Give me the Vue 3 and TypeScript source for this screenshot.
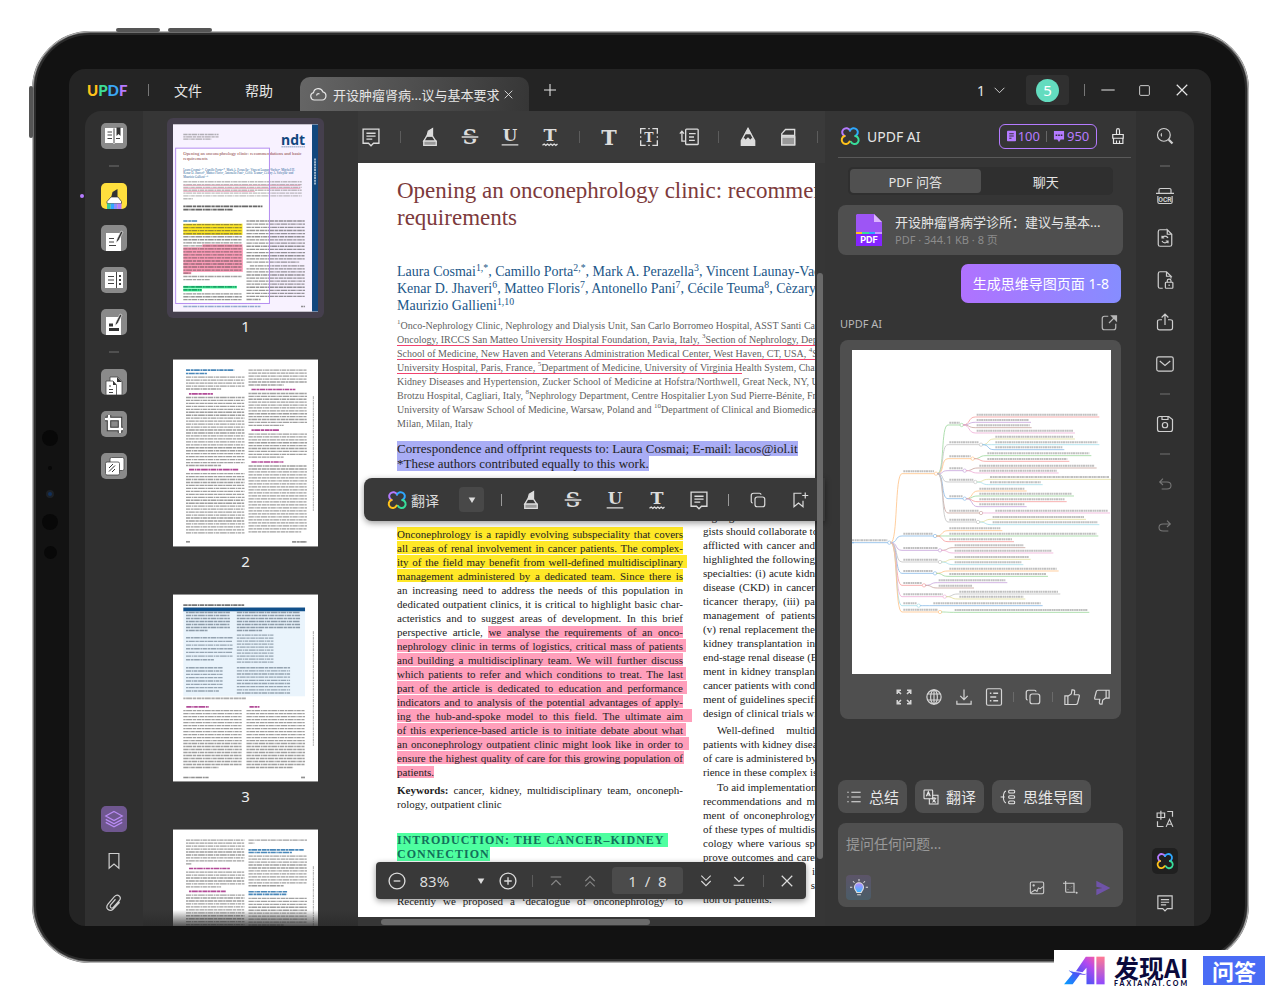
<script setup lang="ts">
import { ref } from 'vue'

interface DocLine { text: string; ext?: number }
interface Rule { x: number; y: number; w: number; c: string; h: number }
interface Branch { x0: number; y0: number; x1: number; y1: number; x2: number; c: string; dot: boolean }

const petals = '<g fill="none" stroke-width="2.4" stroke-linecap="round"><path d="M5.500 12A4.900 4.900 0 1 1 12 5.500" stroke="#b57bff"/><path d="M12 5.500A4.900 4.900 0 1 1 18.500 12" stroke="#2ea8ff"/><path d="M18.500 12A4.900 4.900 0 1 1 13 18.800" stroke="#37dd9b"/><path d="M11.400 18.800A4.900 4.900 0 1 1 5.500 12" stroke="#ffc21a"/></g>'

const glyphs: Record<string, string> = {
  petals,
  note: '<path d="M2.500 2.500h19v17H15l-3 3-3-3H2.500z"/><path d="M6.500 7.500h11M6.500 11h11M6.500 14.500h7"/>',
  marker: '<path d="M8.500 10.500 10 5l5-3v8.500z" fill="currentColor"/><path d="M8 11h7l4 6H4.500z"/><path d="M4.500 17h15v5h-15z" fill="#999"/>',
  strike: '<text x="12" y="20.500" text-anchor="middle" font-family="DejaVu Serif" font-weight="700" font-size="24" fill="currentColor" stroke="none">S</text><path d="M2 12h20" stroke="#3a3a3a" stroke-width="4"/><path d="M2 12h20"/>',
  under: '<text x="12" y="17" text-anchor="middle" font-family="DejaVu Serif" font-weight="700" font-size="20" fill="currentColor" stroke="none">U</text><path d="M2 21.500h20"/>',
  wavy: '<text x="12" y="17" text-anchor="middle" font-family="DejaVu Serif" font-weight="700" font-size="21" fill="currentColor" stroke="none">T</text><path d="m3 22 2-1.500L7 22l2-1.500 2 1.500 2-1.500 2 1.500 2-1.500 2 1.500 2-1.500"/>',
  text: '<text x="12" y="21" text-anchor="middle" font-family="DejaVu Serif" font-weight="700" font-size="25" fill="currentColor" stroke="none">T</text>',
  textbox: '<text x="12" y="17.500" text-anchor="middle" font-family="DejaVu Serif" font-weight="700" font-size="15" fill="currentColor" stroke="none">T</text><path d="M2 8V2h6M16 2h6v6M22 16v6h-6M8 22H2v-6M11 2h2M11 22h2M2 11v2M22 11v2"/>',
  callout: '<rect x="8" y="2.500" width="15" height="18.500" rx="1"/><path d="M12 8h8M12 12h6M12 16h7M8 17H3.500V5M1 8l2.500-3L6 8"/>',
  pencil: '<path d="M12 2l8 14.500V22H4v-5.500z"/><path d="M12 2l3 6H9zM4.500 17l2.500-3 2 2.500 3-3 3 3 2-2.500 2.500 3v5h-15z" fill="currentColor"/>',
  eraser: '<path d="M4.500 21.500V8L9 3h11v18.500z"/><path d="M4.500 12H20v9.500H4.500z" fill="#999"/><path d="M4.500 10.500H20" stroke-width="2.500"/>',
  copy: '<rect x="8" y="8" width="13" height="13" rx="3"/><path d="M5 16c-1.500 0-2-1-2-2V6c0-2 1-3 3-3h8c1.500 0 2 .5 2 2"/>',
  bookplus: '<path d="M14 3H4v18l6-5 6 5v-8M19 2v8M15 6h8"/>',
  minus: '<circle cx="12" cy="12" r="9.500"/><path d="M8 12h8"/>',
  plus: '<circle cx="12" cy="12" r="9.500"/><path d="M7.500 12h9M12 7.500v9"/>',
  first: '<path d="M4 6h16M5 18l7-7 7 7"/>',
  prev: '<path d="m5 12 7-7 7 7M5 20l7-7 7 7"/>',
  next: '<path d="m5 4 7 7 7-7M5 12l7 7 7-7"/>',
  last: '<path d="m5 6 7 7 7-7M4 18.500h16"/>',
  close: '<path d="m5 5 14 14M19 5 5 19"/>',
  add: '<path d="M12 3v18M3 12h18"/>',
  cloud: '<path d="M7 20a5 5 0 0 1-1-9.800 6.500 6.500 0 0 1 12.500-1A5.500 5.500 0 0 1 17.500 20z"/><path d="M14 12a3 3 0 0 0-3 0l-1 2"/>',
  chevron: '<path d="m3 7 9 9 9-9"/>',
  caret: '<path d="M4 6h16l-8 13z" fill="currentColor" stroke="none"/>',
  dash: '<path d="M2 12h20"/>',
  square: '<rect x="3" y="3" width="18" height="18" rx="2"/>',
  broom: '<path d="M10 10V4.500c0-3 4-3 4 0V10M5 10h14v5H5zM6 15v7h12.500v-7M10 22v-4M14 22v-4"/>',
  search: '<circle cx="10.500" cy="10.500" r="8.500"/><path d="M7.500 8.500c-1 1.500-.5 3 0 4"/><path d="m17 17 5 5" stroke-width="3"/>',
  ocr: '<path d="M4 8V3.500C4 2 5 2 6 2h12c1 0 2 0 2 1.500V8M0 8.500h24M2.500 12v8c0 1.500 1 2 2 2h15c1 0 2-.5 2-2v-8"/><text x="12" y="19.500" text-anchor="middle" font-family="Roboto" font-weight="700" font-size="9" fill="currentColor" stroke="none">OCR</text>',
  convert: '<path d="M15 1H5.500C4 1 3 2 3 3.500v17C3 22 4 23 5.500 23h13c1.500 0 2.500-1 2.500-2.500V7l-6-6v6h6"/><path d="M8 12a4.500 4.500 0 0 1 8 0M16 16a4.500 4.500 0 0 1-8 0M8 9v3h3M16 19v-3h-3"/>',
  lock: '<path d="M9 23H5.500C4 23 3 22 3 20.500v-17C3 2 4 1 5.500 1H14l6 6h-6V1M20 7v3"/><rect x="12.500" y="15" width="10" height="8" rx="1"/><path d="M15 15v-2c0-3 5-3 5 0v2M17.500 18v2"/>',
  share: '<path d="M8 9H5c-1.500 0-3 .5-3 2v9c0 1.500 1 2.500 3 2.500h14c2 0 3-1 3-2.500v-9c0-1.500-1.500-2-3-2h-3M12 16V2M7.500 6 12 1.500 16.500 6"/>',
  mail: '<rect x="1" y="2.500" width="22" height="19" rx="2.500"/><path d="m5 8 7 6 7-6"/>',
  save: '<path d="M5 2h12l5 4v13c0 2-1 3-3 3H5c-2 0-3-1-3-3V5c0-2 1-3 3-3zM8 2v4h8V2"/><circle cx="12" cy="13.500" r="3.500"/>',
  undo: '<path d="M9 4 4 9l5 4.500M4 9h11c8 0 8 10.500 0 10.500H7"/>',
  redo: '<path d="m15 4 5 5-5 4.500M20 9H9c-8 0-8 10.500 0 10.500h8"/>',
  translate: '<path d="M1.500 4h10v6h-10zM6.500 1v12M15 2h7v7M2 15v7h8"/><path d="m13.500 22.500 4.500-10 4.500 10M15 19h6"/>',
  layers: '<path d="M12 2 23 8l-11 6L1 8zM1 12.500l11 6 11-6M1 16.500l11 6 11-6"/>',
  bookmark: '<path d="M5.500 2h13v19.500L12 16l-6.500 5.500z"/>',
  clip: '<path d="m14 7-6.500 7.500c-2 3 1 5.500 3.500 3.500l8-9c4-5-2-10-6.500-5.500L4 13.500c-4.500 6 2.500 11 7 6.500l8.500-9"/>',
  exportup: '<path d="M11 3H6C4 3 3 4 3 6v12c0 2 1 3 3 3h12c2 0 3-1 3-3v-5M12 12l8-8"/><path d="M15.500 2.500H22V9z" fill="currentColor"/>',
  expand: '<path d="M8 8 3.500 3.500M16 8l4.500-4.500M8 16l-4.500 4.500M16 16l4.500 4.500M3 8V3h5M16 3h5v5M21 16v5h-5M8 21H3v-5" stroke-width="2"/>',
  globe: '<circle cx="12" cy="12" r="9.500"/><ellipse cx="12" cy="12" rx="4.500" ry="9.500"/><path d="M3.500 8h17M3.500 16h17M12 2.500v19"/>',
  download: '<path d="M12 2v13M7 10.500l5 5 5-5M2.500 17v4.500h19V17"/>',
  summary: '<rect x="2" y="1" width="20" height="22" rx="2"/><path d="M6.500 7h2M11 7h6.500M7 12h8M6.500 17h2M11 17h6.500" stroke-width="2"/>',
  up: '<path d="M2.500 10.500h4V22h-4zM6.500 11 11 8l1-5.500c3-.5 4 1 3.500 3L15 9h5.500c1.500 0 1.500 1.500 1 3l-2 8c-.5 1.500-1 2-2 2H6.500"/>',
  down: '<path d="M21.500 13.500h-4V3h4zM17.500 13 13 16l-1 5.500c-3 .5-4-1-3.500-3L9 15H3.500C2 15 2 13.500 2.500 12l2-7.500C5 3 5.500 3 6.500 3h11"/>',
  list: '<path d="M2 5h2M8 5h14M2 12h2M8 12h14M2 19h2M8 19h14"/>',
  swap: '<rect x="1.500" y="1.500" width="13" height="13" rx="1"/><path d="M14.500 9.500h8v13h-13v-8"/><path d="m5 11 3-7 3 7M6 9h4M13 14h7M16.500 12v2M14 20c3-1 4-3 4.500-6M14.500 15c1 3 3 4.500 5 5"/>',
  mind: '<path d="M9 3c-4 1-3.500 6-4 9 .5 3 0 8 4 9M1 12h6"/><rect x="13" y="2" width="9" height="4" rx="1.500"/><rect x="13" y="10" width="9" height="4" rx="1.500"/><rect x="13" y="18" width="9" height="4" rx="1.500"/>',
  image: '<rect x="2" y="3" width="20" height="17.500" rx="2"/><path d="m3 19 6-4 3 2 2-5 3 1 4-3"/><circle cx="7" cy="8" r="1"/>',
  crop: '<path d="M1.500 5H18v13M5.500 1.500V17c0 1 .5 1.500 1.500 1.500h13M9 14v.5M12 11.500v.5M14.500 9v.5"/><circle cx="22" cy="19" r=".7"/>',
  send: '<path d="m2 1 21 11L2 23V14l9-2-9-2z" fill="currentColor" stroke="none"/>',
}

const tiles: Record<string, string> = {
  reader: '<path d="M4 5h8l1 1 1-1h8v15h-8l-1 1-1-1H4z" fill="#fff"/><path d="M13 6v14M6.500 9H11M6.500 12H11M6.500 15.500H11M15 15.500h4" stroke="#444"/><path d="M15.500 4.500h4V13l-2-2-2 2z" fill="#333"/>',
  comment: '<path d="m10 15 1.500-6 5-3V15z" fill="#333"/><path d="M6 20.500v-2L10 14h7l3.500 4.500v2z" fill="#fff" stroke="#333" stroke-width=".7"/><path d="M6 20.500h3.500V26H6z" fill="#38c9a0"/><path d="M9.500 20.500H13V26H9.500z" fill="#32a8ff"/><path d="M13 20.500h3.500V26H13z" fill="#8b8cff"/><path d="M16.500 20.500h4V26h-4z" fill="#b57bff"/>',
  edit: '<path d="M5 8h15v18H5z" fill="#fff"/><path d="M8 13.500h5M8 17h5M8 20.500h7" stroke="#444"/><path d="m15 18 1-4 4-8 2 1-4 8z" fill="#333" stroke="#fff" stroke-width=".6"/>',
  form: '<path d="M4 5h18v16H4z" fill="#fff"/><path d="M15.500 5v16M7 9.500h6M7 13h6M7 16.500h6" stroke="#444"/><path d="M18 9h2M18 13h2M18 17h2" stroke="#444" stroke-width="2"/>',
  sign: '<path d="M5 8h15v18H5z" fill="#fff"/><path d="M8 16h4M8 20.500h10" stroke="#333" stroke-width="3"/><path d="m14 17 1-4 4-8 2 1-4 8z" fill="#333" stroke="#fff" stroke-width=".6"/>',
  organize: '<path d="M9 8h8l4 4.500V26H9z" fill="#fff" stroke="#444" stroke-width=".8"/><path d="M16 8v5h5z" fill="#333"/><path d="M5 12h7l3.500 4v10H5z" fill="#fff" stroke="#444" stroke-width=".8"/><path d="M12 12v4h3.500z" fill="#333"/><path d="M8 17h2M8 20.500h4M8 23.500h4" stroke="#444"/>',
  crop: '<path d="M4 8h15v14M8 4v14h14" stroke="#333" stroke-width="4.400" fill="none"/><path d="M4 8h15v14M8 4v14h14" stroke="#fff" stroke-width="2.400" fill="none"/>',
  batch: '<rect x="9" y="4.500" width="14" height="13" rx="1.500" fill="#fff" stroke="#444" stroke-width=".8"/><rect x="4.500" y="9" width="14" height="13" rx="1.500" fill="#fff" stroke="#444" stroke-width=".8"/><path d="m8 15 4-4M8 18.500l6-6M11 19l3-3" stroke="#333"/>',
}

const tools = ['note', '|', 'marker', 'strike', 'under', 'wavy', '|', 'text', 'textbox', 'callout', '|', 'pencil', 'eraser', '|']
const leftTools = ['reader', '|', 'comment', 'edit', 'form', 'sign', '|', 'organize', 'crop', 'batch']
const leftBottom = ['layers', 'bookmark', 'clip']
const rightTools = ['search', '|', 'ocr', 'convert', 'lock', 'share', 'mail', '|', 'save', '|', 'undo', 'redo']
const rightBottom = ['translate', 'petals', 'note']
const answerTools = ['expand', 'globe', 'download', 'summary', '|', 'copy', '|', 'up', 'down']

const yellow: DocLine[] = [
  { text: 'Onconephrology is a rapidly evolving subspeciality that covers' },
  { text: 'all areas of renal involvement in cancer patients. The complex-' },
  { text: 'ity of the field may benefit from well-defined multidisciplinary', ext: 4 },
  { text: 'management administered by a dedicated team. Since there is' },
]
const plain: DocLine[] = [
  { text: 'an increasing need to address the needs of this population in' },
  { text: 'dedicated outpatient clinics, it is critical to highlight basic char-' },
  { text: 'acteristics and to suggest areas of development. In this brief' },
]
const pink: DocLine[] = [
  { text: 'nephrology clinic in terms of logistics, critical mass of patients', ext: 3 },
  { text: 'and building a multidisciplinary team. We will further discuss' },
  { text: 'which patients to refer and which conditions to treat. The last', ext: 3 },
  { text: 'part of the article is dedicated to education and performance', ext: 4 },
  { text: 'indicators and to analysis of the potential advantages of apply-' },
  { text: 'ing the hub-and-spoke model to this field. The ultimate aim', ext: 9 },
  { text: 'of this experience-based article is to initiate debate about what', ext: 3 },
  { text: 'an onconephrology outpatient clinic might look like in order to', ext: 6 },
  { text: 'ensure the highest quality of care for this growing population of', ext: 1 },
]
const rightParas: string[][] = [
  ['highlight several of the', 'gists should collaborate to', 'afflicted with cancer and', 'highlighted the following', 'specialties: (i) acute kidn', 'disease (CKD) in cancer', 'ticancer therapy, (iii) pa', 'management of patients', '(v) renal replacement the', 'kidney transplantation in', 'end-stage renal disease (E', 'ment in kidney transplan', 'cancer patients with cond', 'ment of guidelines specifi', 'design of clinical trials wit'],
  ['Well-defined multid', 'patients with kidney disea', 'of care is administered by', 'rience in these complex is'],
  ['To aid implementation', 'recommendations and m', 'ment of onconephrology', 'of these types of multidis', 'cology where various sp', 'prove outcomes and care', 'perspective article the i', 'clinic might look to s'],
]

const question = ref('')
const zoom = ref('83%')
const pageField = ref('1  /  8')

function block(x: number, y: number, w: number, n: number, pitch: number, c = '#555', lastW = 0.6): Rule[] {
  return Array.from({ length: n }, (_, i) => ({ x, y: y + i * pitch, w: i === n - 1 ? w * lastW : w, c, h: 4 }))
}
const head = (x: number, y: number, w: number, c: string): Rule => ({ x, y, w, c, h: 5 })
const blue = '#1f6ba8'
const plum = '#a0207f'

const thumbs: Rule[][] = [
  [
    ...block(31, 30, 106, 3, 7, '#777', 0.8),
    ...block(31, 172, 356, 7, 8.5, '#888', 0.08),
    head(31, 246, 238, '#444'), head(31, 256, 150, '#444'), head(31, 290, 42, blue),
    ...block(31, 301, 176, 17, 9.1, '#444', 0.13),
    ...block(31, 457, 176, 2, 9.5, '#555', 0.45),
    head(31, 488, 160, '#128a5a'), head(31, 497, 55, '#128a5a'),
    ...block(31, 509, 176, 3, 8.8, '#444', 1),
    ...block(221, 290, 176, 14, 9.5, '#444', 0.9),
    ...block(231, 425, 166, 1, 9.2, '#444', 1), ...block(221, 434, 176, 11, 9.2, '#444', 0.24),
    ...block(31, 547, 232, 1, 8, '#3d6fa5', 1), head(385, 547, 12, '#777'),
  ],
  [
    head(39, 32, 145, blue), head(39, 42, 64, blue), ...block(39, 53, 176, 5, 8.9), head(48, 103, 72, plum),
    ...block(39, 114, 176, 24, 8.9), head(48, 331, 148, plum), ...block(39, 343, 176, 21, 8.9, '#555', 1),
    ...block(227, 32, 176, 6, 8.900), head(236, 90, 132, plum), ...block(227, 102, 176, 12, 8.7), head(236, 212, 84, plum),
    ...block(227, 224, 176, 9, 8.7), head(236, 308, 96, plum), ...block(227, 320, 176, 23, 9, '#555', 0.9),
    head(39, 548, 12, '#777'), head(358, 548, 45, '#777'),
  ],
  [
    head(31, 32, 183, '#555'), ...block(39, 54, 132, 7, 9, '#456', 0.5), ...block(192, 54, 190, 7, 9, '#456', 0.4),
    ...block(39, 130, 140, 7, 11, '#567', 0.6), ...block(39, 220, 110, 8, 10, '#567', 0.9),
    ...block(192, 122, 110, 10, 9, '#567', 1), ...block(192, 220, 160, 9, 9.500, '#567', 1),
    head(31, 312, 188, '#999'), head(40, 338, 68, plum), head(230, 338, 30, plum),
    ...block(31, 349, 176, 20, 9), ...block(221, 349, 176, 20, 9, '#555', 0.8), head(31, 550, 76, '#777'), head(385, 550, 12, '#777'),
  ],
  [
    ...block(39, 32, 176, 9, 8.9, '#555', 0.1), head(48, 117, 124, plum), ...block(39, 128, 176, 6, 8.9), head(48, 186, 112, plum),
    ...block(39, 197, 176, 12, 8.9), ...block(227, 32, 176, 2, 9, '#555', 0.1), head(227, 61, 166, blue), head(227, 69, 132, blue),
    ...block(227, 80, 176, 11, 8.9), head(227, 187, 116, blue), head(227, 195, 116, blue), ...block(227, 207, 176, 10, 8.9),
  ],
]
const weave = ['13 2 8 1.500 17 2 5 1.500', '7 1.500 18 2 10 2 14 1.500', '16 2 4 1.500 11 2 20 2 6 1.500']

const palette = ['#f5a0a0', '#c8a6dc', '#c9a6a0', '#efb0d8', '#e2dfa0', '#a8e0ea', '#8bbce8', '#9fd89f']
const orange = '#ffc48a'
const branches: Branch[] = []
const link = (x0: number, y0: number, x1: number, y1: number, x2: number, c: string, dot: boolean) => branches.push({ x0, y0, x1, y1, x2, c, dot })
link(96, 640, 96, 640, 208, '#8bbce8', true)
;([[433, 348, orange], [620, 345, '#8bbce8'], [663, 360, '#c8a6dc'], [698, 360, '#c4c4c4'], [732, 345, '#8bbce8'], [768, 312, '#f5a0a0'], [802, 374, '#efb0d8'], [829, 296, '#a8e0ea'], [848, 360, orange]] as [number, number, string][])
  .forEach(([y, x, c]) => link(212, 640, 250, y, x, c, true))
;([[287, 425, '#9fd89f'], [346, 483, '#c4c4c4'], [388, 458, orange], [424, 434, '#c8a6dc'], [458, 466, '#c4c4c4'], [508, 434, '#8bbce8'], [551, 483, '#c9a6a0'], [578, 474, '#c4c4c4']] as [number, number, string][])
  .forEach(([y, x, c]) => link(352, 433, 388, y, x, c, true))
// Each group: parent x, parent y, leaf x, [leaf y, leaf end, palette index]
;([[425, 287, 470, [[263, 838, 0], [279, 633, 1], [295, 635, 2], [311, 765, 3]]], [483, 346, 526, [[329, 765, 4], [346, 838, 5], [361, 733, 6]]],
  [458, 388, 502, [[379, 814, 7], [396, 748, 0]]], [434, 424, 478, [[416, 830, 2], [431, 716, 3]]], [466, 458, 510, [[450, 873, 4], [466, 668, 5]]],
  [434, 508, 478, [[485, 620, 8], [500, 762, 7], [517, 740, 0], [532, 620, 1]]], [483, 551, 526, [[551, 870, 3]]], [474, 578, 518, [[570, 798, 4], [586, 838, 5]]],
  [345, 620, 388, [[604, 547, 8], [620, 835, 7], [637, 582, 0]]], [360, 663, 404, [[655, 616, 2], [671, 700, 3]]], [360, 698, 404, [[690, 632, 4], [706, 610, 5]]],
  [345, 732, 388, [[725, 716, 8], [741, 684, 7]]], [312, 768, 356, [[760, 562, 1], [776, 462, 2]]], [374, 802, 418, [[794, 721, 9], [809, 616, 4]]],
  [296, 829, 340, [[829, 668, 6]]], [360, 848, 404, [[849, 808, 7]]]] as [number, number, number, [number, number, number][]][])
  .forEach(([px, py, x, kids]) => kids.forEach(([y, e, k]) => link(px + 4, py, x, y, e, [...palette, orange, '#c4c4c4'][k], false)))

const curve = (b: Branch) => `M${b.x0} ${b.y0}C${b.x0 + 22} ${b.y0} ${b.x1 - 26} ${b.y1} ${b.x1 - 4} ${b.y1}H${b.x2}`
</script>

<template>
  <main class="stage">
    <div class="device">
      <i class="key key-a"></i><i class="key key-b"></i><i class="key key-c"></i>
      <div class="sensors"><i class="big"></i><i class="dot"></i><i class="lens"></i><i class="big"></i><i class="mid"></i></div>
      <div class="screen">
        <header class="titlebar">
          <strong class="brand"><span class="u">U</span><span class="p">P</span><span class="d">D</span><span class="f">F</span></strong>
          <i class="vr"></i>
          <nav class="menus"><button>文件</button><button>帮助</button></nav>
          <div class="doc-tab">
            <svg class="ic s18" viewBox="0 0 24 24" v-html="glyphs.cloud"></svg>
            <span>开设肿瘤肾病...议与基本要求</span>
            <button aria-label="关闭标签"><svg class="ic s14" viewBox="0 0 24 24" v-html="glyphs.close"></svg></button>
          </div>
          <button class="add" aria-label="新标签"><svg class="ic s16" viewBox="0 0 24 24" v-html="glyphs.add"></svg></button>
          <div class="win">
            <button class="count">1 <svg class="ic s14" viewBox="0 0 24 24" v-html="glyphs.chevron"></svg></button>
            <button class="avatar"><span>5</span></button>
            <i class="vr"></i>
            <button aria-label="最小化"><svg class="ic s16" viewBox="0 0 24 24" v-html="glyphs.dash"></svg></button>
            <button aria-label="最大化"><svg class="ic s14" viewBox="0 0 24 24" v-html="glyphs.square"></svg></button>
            <button aria-label="关闭"><svg class="ic s18" viewBox="0 0 24 24" v-html="glyphs.close"></svg></button>
          </div>
        </header>

        <div class="work">
          <aside class="rail left">
            <template v-for="(t, i) in leftTools" :key="i">
              <i v-if="t === '|'" class="hr"></i>
              <button v-else class="tile" :class="{ on: t === 'comment' }" :aria-label="t"><svg viewBox="0 0 26 26" fill="none" v-html="tiles[t]"></svg></button>
            </template>
            <div class="foot">
              <button v-for="t in leftBottom" :key="t" :class="{ lay: t === 'layers' }" :aria-label="t"><svg class="ic s18" viewBox="0 0 24 24" v-html="glyphs[t]"></svg></button>
            </div>
            <i class="active-dot"></i>
          </aside>

          <section class="thumbs">
            <figure v-for="(rules, i) in thumbs" :key="i" :class="{ current: i === 0 }">
              <div class="frame">
                <svg viewBox="0 0 436 562">
                  <rect width="436" height="562" fill="#fff" />
                  <template v-if="i === 0">
                    <rect width="436" height="562" fill="#f8f2ff" />
                    <rect x="8" y="71" width="282" height="467" fill="#fff" />
                    <rect x="418" width="18" height="562" fill="#11477d" />
                    <text x="325" y="62" class="t-ndt">ndt</text>
                    <path d="M326 67h71" stroke="#11477d" stroke-width="2" stroke-dasharray="5 1" opacity=".7" />
                    <path d="M427 102v80" stroke="#fff" stroke-width="5" stroke-dasharray="6 2" opacity=".7" />
                    <text x="31" y="91" class="t-title">Opening an onconephrology clinic: recommendations and basic</text>
                    <text x="31" y="108" class="t-title">requirements</text>
                    <text x="31" y="140" class="t-auth">Laura Cosmai¹·*, Camillo Porta²·*, Mark A. Perazella³, Vincent Launay-Vacher⁴, Mitchell H.</text>
                    <text x="31" y="150" class="t-auth">Kenar D. Jhaveri⁶, Matteo Floris⁷, Antonello Pani⁷, Cécile Teuma⁸, Cèzary A. Szczylik⁹ and</text>
                    <text x="31" y="160" class="t-auth">Maurizio Gallieni¹·¹⁰</text>
                    <rect x="31" y="298" width="178" height="34" fill="#ffe827" />
                    <rect x="88" y="360" width="121" height="9" fill="#ff9fbb" /><rect x="31" y="369" width="179" height="74" fill="#ff9fbb" /><rect x="31" y="441" width="24" height="9" fill="#ff9fbb" />
                    <rect x="31" y="485" width="161" height="8" fill="#4effa0" /><rect x="31" y="494" width="56" height="8" fill="#4effa0" />
                    <path d="M31 183h352M31 192h352M31 201h215" stroke="#e88aa8" stroke-width="2" />
                  </template>
                  <template v-if="i === 2">
                    <rect x="31" y="39" width="366" height="12" fill="#11508a" /><rect x="31" y="51" width="366" height="255" fill="#eaf4fc" />
                  </template>
                  <path v-for="(r, k) in rules" :key="k" :d="`M${r.x} ${r.y}h${r.w}`" :stroke="r.c" :stroke-width="r.h" :stroke-dasharray="weave[k % 3]" :opacity="r.h === 5 ? .8 : .55" />
                  <path v-if="i" d="M422 110v345" stroke="#888" stroke-width="3" stroke-dasharray="9 2 4 2" opacity=".7" />
                  <rect v-if="i === 0" x="8" y="71" width="282" height="467" fill="none" stroke="#b48cf0" stroke-width="3" />
                </svg>
              </div>
              <figcaption v-if="i < 3">{{ i + 1 }}</figcaption>
            </figure>
          </section>

          <section class="viewer">
            <div class="toolbar">
              <template v-for="(t, i) in tools" :key="i">
                <i v-if="t === '|'" class="sep"></i>
                <button v-else :aria-label="t"><svg class="ic s20" viewBox="0 0 24 24" v-html="glyphs[t]"></svg></button>
              </template>
            </div>
            <article class="page">
              <h1>Opening an onconephrology clinic: recommendations<br>requirements</h1>
              <p class="authors">Laura Cosmai<sup>1,*</sup>, Camillo Porta<sup>2,*</sup>, Mark A. Perazella<sup>3</sup>, Vincent Launay-Vacher<br>Kenar D. Jhaveri<sup>6</sup>, Matteo Floris<sup>7</sup>, Antonello Pani<sup>7</sup>, Cécile Teuma<sup>8</sup>, Cèzary A. Szczylik<br>Maurizio Gallieni<sup>1,10</sup></p>
              <p class="affil"><sup>1</sup>Onco-Nephrology Clinic, Nephrology and Dialysis Unit, San Carlo Borromeo Hospital, ASST Santi Carlo<br><u>Oncology, IRCCS San Matteo University Hospital Foundation, Pavia, Italy, <sup>3</sup>Section of Nephrology, Department</u><br><u>School of Medicine, New Haven and Veterans Administration Medical Center, West Haven, CT, USA, <sup>4</sup>Service</u><br><u>University Hospital, Paris, France, <sup>5</sup>Department of Medicine, University of Virginia H</u>ealth System, Charlottesville<br>Kidney Diseases and Hypertension, Zucker School of Medicine at Hofstra/Northwell, Great Neck, NY, USA<br>Brotzu Hospital, Cagliari, Italy, <sup>8</sup>Nephrology Department, Centre Hospitalier Lyon Sud Pierre-Bénite, France<br>University of Warsaw School of Medicine, Warsaw, Poland and <sup>10</sup>Department of Clinical and Biomedical<br>Milan, Milan, Italy</p>
              <p class="corr"><mark>Correspondence and offprint requests to: Laura Cosmai; E-mail: lacos@iol.it</mark><br><mark>*These authors contributed equally to this work.</mark></p>
              <div class="cols">
                <div class="col-a">
                  <div v-for="l in yellow" :key="l.text" class="ln y" :style="{ paddingRight: (l.ext ?? 0) + 'px' }"><span>{{ l.text }}</span></div>
                  <div v-for="l in plain" :key="l.text" class="ln">{{ l.text }}</div>
                  <div class="ln">perspective article, <mark class="k">we analyse the requirements of an onco-</mark></div>
                  <div v-for="l in pink" :key="l.text" class="ln k" :style="{ paddingRight: (l.ext ?? 0) + 'px' }"><span>{{ l.text }}</span></div>
                  <div class="ln end"><mark class="k">patients.</mark></div>
                  <div class="ln keywords"><b>Keywords:</b> cancer, kidney, multidisciplinary team, onconeph-</div>
                  <div class="ln end">rology, outpatient clinic</div>
                  <h2><mark>INTRODUCTION: THE CANCER–KIDNEY&nbsp;</mark><br><mark>CONNECTION</mark></h2>
                  <div class="ln recent">Recently we proposed a ‘decalogue of onconephrology’ to</div>
                </div>
                <div class="col-b">
                  <p v-for="(p, i) in rightParas" :key="i" :class="'p' + i"><span v-for="l in p" :key="l" class="ln">{{ l }}</span><span v-if="i === 2" class="ln end">tion of patients.</span></p>
                </div>
              </div>
            </article>
            <div class="hscroll"><i></i></div>
            <div class="vscroll"><i></i></div>
            <div class="selbar">
              <button class="tr"><svg class="ic s20" viewBox="0 0 24 24" v-html="glyphs.petals"></svg>翻译</button>
              <button class="drop" aria-label="更多"><svg class="ic s12" viewBox="0 0 24 24" v-html="glyphs.caret"></svg></button>
              <i class="sep lit"></i>
              <button v-for="t in ['marker', 'strike', 'under', 'wavy', 'note']" :key="t" :aria-label="t"><svg class="ic s20" viewBox="0 0 24 24" v-html="glyphs[t]"></svg></button>
              <i class="sep lit"></i>
              <button v-for="t in ['copy', 'bookplus']" :key="t" :aria-label="t"><svg class="ic s18" viewBox="0 0 24 24" v-html="glyphs[t]"></svg></button>
            </div>
            <div class="zoombar">
              <button aria-label="缩小"><svg class="ic s20" viewBox="0 0 24 24" v-html="glyphs.minus"></svg></button>
              <label class="pct"><select v-model="zoom" aria-label="缩放"><option>83%</option><option>100%</option></select><svg class="ic s12" viewBox="0 0 24 24" v-html="glyphs.caret"></svg></label>
              <button aria-label="放大"><svg class="ic s20" viewBox="0 0 24 24" v-html="glyphs.plus"></svg></button>
              <i class="sep"></i>
              <button class="dim" aria-label="首页"><svg class="ic s16" viewBox="0 0 24 24" v-html="glyphs.first"></svg></button>
              <button class="dim" aria-label="上一页"><svg class="ic s16" viewBox="0 0 24 24" v-html="glyphs.prev"></svg></button>
              <input v-model="pageField" aria-label="页码">
              <button aria-label="下一页"><svg class="ic s16" viewBox="0 0 24 24" v-html="glyphs.next"></svg></button>
              <button aria-label="末页"><svg class="ic s16" viewBox="0 0 24 24" v-html="glyphs.last"></svg></button>
              <i class="sep"></i>
              <button aria-label="关闭"><svg class="ic s18" viewBox="0 0 24 24" v-html="glyphs.close"></svg></button>
            </div>
          </section>

          <section class="ai">
            <header class="ai-head">
              <svg class="ic s20" viewBox="0 0 24 24" v-html="glyphs.petals"></svg>
              <h2>UPDF AI</h2>
              <div class="quota">
                <svg viewBox="0 0 12 14" width="9" height="12"><rect width="12" height="14" rx="1" fill="#b57bff" /><path d="M3 4h6M3 7h6M3 10h3" stroke="#35303d" stroke-width="1.500" /></svg><span>100</span><i></i>
                <svg viewBox="0 0 14 13" width="12" height="11"><path d="M1 0h12v10H9l-2 3-2-3H1z" fill="#b57bff" /><path d="M3 5h2M6 5h2M9 5h2" stroke="#35303d" stroke-width="2" /></svg><span>950</span>
              </div>
              <button aria-label="清除"><svg class="ic s18" viewBox="0 0 24 24" v-html="glyphs.broom"></svg></button>
            </header>
            <div class="tabs"><button class="sel">PDF 问答</button><button>聊天</button></div>
            <div class="file">
              <svg viewBox="0 0 26 32" width="26" height="32">
                <path d="M1 0h17l8 8v24H0V1z" fill="#9d55f5" /><path d="M0 20h26v12H0z" fill="#8424ff" /><path d="M18 0l8 8h-8z" fill="#dcb5ff" />
                <path d="M0 19h6" stroke="#ffc21a" stroke-width="2" /><path d="M6 19h7" stroke="#37dd9b" stroke-width="2" /><path d="M13 19h6" stroke="#2ea8ff" stroke-width="2" /><path d="M19 19h7" stroke="#c79bff" stroke-width="2" />
                <text x="13" y="29" text-anchor="middle" font-family="Inter" font-weight="700" font-size="9" fill="#fff">PDF</text>
              </svg>
              <div><b>开设肿瘤肾病学诊所：建议与基本...</b><small>PDF · 344.1 KB · 8 页</small></div>
            </div>
            <p class="bubble">生成思维导图页面 1-8</p>
            <div class="from"><span>UPDF AI</span><button aria-label="打开"><svg class="ic s18" viewBox="0 0 24 24" v-html="glyphs.exportup"></svg></button></div>
            <div class="answer">
              <svg class="map" viewBox="96 62 777 973" fill="none">
                <rect x="96" y="62" width="777" height="973" fill="#fff" />
                <g v-for="(b, i) in branches" :key="i">
                  <path :d="curve(b)" :stroke="b.c" stroke-width="2.500" />
                  <path :d="`M${b.x1} ${b.y1 - 7}H${b.x2 - 6}`" stroke="#8d8d8d" stroke-width="6" stroke-dasharray="6 1.500 5 1 7 1.500 4 1" opacity=".55" />
                  <circle v-if="b.dot" :cx="b.x2" :cy="b.y1" r="5" :stroke="b.c" stroke-width="2" fill="#fff" />
                </g>
              </svg>
              <div class="acts">
                <template v-for="(t, i) in answerTools" :key="i">
                  <i v-if="t === '|'"></i>
                  <button v-else :aria-label="t"><svg class="ic s18" viewBox="0 0 24 24" v-html="glyphs[t]"></svg></button>
                </template>
              </div>
            </div>
            <div class="chips">
              <button><svg class="ic s16" viewBox="0 0 24 24" v-html="glyphs.list"></svg>总结</button>
              <button><svg class="ic s16" viewBox="0 0 24 24" v-html="glyphs.swap"></svg>翻译</button>
              <button><svg class="ic s16" viewBox="0 0 24 24" v-html="glyphs.mind"></svg>思维导图</button>
            </div>
            <form class="ask" @submit.prevent>
              <textarea v-model="question" placeholder="提问任何问题..." aria-label="提问"></textarea>
              <div class="ask-row">
                <button type="button" class="bulb" aria-label="提示">
                  <svg viewBox="0 0 24 24" width="18" height="18" fill="none" stroke="#ddd" stroke-width="1.400">
                    <defs><linearGradient id="bulb" x1="0" y1="0" x2="0" y2="1"><stop offset="0" stop-color="#b98aff" /><stop offset="1" stop-color="#38b6ff" /></linearGradient></defs>
                    <path d="M9 18c0-2-3-3-3-7a6 6 0 0 1 12 0c0 4-3 5-3 7z" fill="url(#bulb)" /><path d="M9.500 21h5M12 0v3M4 3l2 2M20 3l-2 2M0 11h3M21 11h3" />
                  </svg>
                </button>
                <button type="button" aria-label="图片"><svg class="ic s16" viewBox="0 0 24 24" v-html="glyphs.image"></svg></button>
                <button type="button" aria-label="截图"><svg class="ic s16" viewBox="0 0 24 24" v-html="glyphs.crop"></svg></button>
                <button class="send" aria-label="发送"><svg class="ic s16" viewBox="0 0 24 24" v-html="glyphs.send"></svg></button>
              </div>
            </form>
          </section>

          <aside class="rail right">
            <template v-for="(t, i) in rightTools" :key="i">
              <i v-if="t === '|'" class="hr"></i>
              <button v-else :class="{ dim: t === 'undo' || t === 'redo' }" :aria-label="t"><svg class="ic" :class="t === 'undo' || t === 'redo' ? 's16' : 's18'" viewBox="0 0 24 24" v-html="glyphs[t]"></svg></button>
            </template>
            <div class="foot">
              <button v-for="t in rightBottom" :key="t" :class="{ dark: t === 'petals' }" :aria-label="t"><svg class="ic s18" viewBox="0 0 24 24" v-html="glyphs[t]"></svg></button>
            </div>
          </aside>
        </div>
      </div>
    </div>

    <div class="credit">
      <svg viewBox="0 0 124 88" width="41" height="29">
        <defs>
          <linearGradient id="ga" x1="0" y1="1" x2="1" y2="0"><stop offset="0" stop-color="#00a2ff" /><stop offset=".4" stop-color="#4b54f5" /><stop offset=".75" stop-color="#b04af0" /><stop offset="1" stop-color="#f45aa8" /></linearGradient>
          <linearGradient id="gi" x1="0" y1="1" x2="0" y2="0"><stop offset="0" stop-color="#8f49ff" /><stop offset="1" stop-color="#ff7a93" /></linearGradient>
        </defs>
        <path d="M66 2h26v84H68V58L48 56l-22 30H0l26-32-12-10 22 2z" fill="url(#ga)" /><path d="M68 36v18H52z" fill="#fff" /><path d="M98 2h25v84H98z" fill="url(#gi)" />
        <path d="M18 44c16 6 34 2 50 12" stroke="#fff" stroke-width="3" fill="none" />
      </svg>
      <div class="words"><strong>发现AI</strong><small>FAXIANAI.COM</small></div>
      <span class="qa">问答</span>
    </div>
  </main>
</template>

<style>
body { margin: 0; background: #fff; }
</style>

<style scoped>
* { box-sizing: border-box; }
.stage { position: relative; height: 100vh; min-height: 900px; padding: 31px 31px 32px 32px; font-family: "Noto Sans", "Noto Sans CJK SC", sans-serif; color: #e6e6e6; background: #fff; }
button { border: 0; padding: 0; margin: 0; background: none; color: inherit; font: inherit; display: flex; align-items: center; justify-content: center; flex: none; }
h1, h2, p, figure { margin: 0; font-weight: 400; }
.ic { fill: none; stroke: currentColor; stroke-width: 1.6; flex: none; display: block; overflow: visible; }
.s12 { width: 10px; height: 10px; } .s14 { width: 13px; height: 13px; } .s16 { width: 16px; height: 16px; }
.s18 { width: 18px; height: 18px; } .s20 { width: 20px; height: 20px; }

.device { position: relative; height: 100%; border: 2px solid #6e6e6e; outline: 1px solid #b5b5b5; outline-offset: -1px; border-radius: 58px; background: #121212; padding: 36px 36px 35px 35px; box-shadow: inset 0 0 0 2px #2c2c2c; }
.key { position: absolute; background: #555; border-radius: 2px; }
.key-a { left: 82px; top: -5px; width: 44px; height: 4px; } .key-b { left: 134px; top: -5px; width: 44px; height: 4px; } .key-c { left: -5px; top: 53px; width: 4px; height: 52px; }
.sensors { position: absolute; left: 8px; top: 397px; width: 16px; display: flex; flex-direction: column; align-items: center; gap: 16px; }
.sensors i { border-radius: 50%; background: #080808; width: 16px; height: 16px; }
.sensors .dot { width: 4px; height: 4px; margin: 4px 0; } .sensors .lens { width: 8px; height: 8px; background: #12305a; border: 2px solid #1d2126; } .sensors .mid { width: 13px; height: 13px; }

.screen { height: 100%; border-radius: 16px; background: #242424; overflow: hidden; display: flex; flex-direction: column; }
.titlebar { height: 42px; flex: none; display: flex; align-items: center; padding-left: 18px; font-size: 14px; }
.brand { font: 900 15px/20px Lato, sans-serif; width: 43px; white-space: nowrap; }
.u { color: #ffc21a; } .p { color: #3ddc97; } .d { color: #3aa7f5; } .f { color: #b57bff; }
.vr { width: 1px; height: 12px; background: #777; margin: 0 18px; }
.menus { display: flex; gap: 43px; padding-left: 7px; }
.doc-tab { height: 34px; width: 229px; align-self: flex-end; margin-left: 27px; padding: 0 14px 0 9px; display: flex; align-items: center; gap: 6px; border-radius: 10px 10px 0 0; background: linear-gradient(100deg, #666, #363636); font-size: 13px; white-space: nowrap; }
.doc-tab span { flex: 1; min-width: 0; }
.doc-tab button { margin-left: -4px; }
.add { margin-left: 13px; }
.win { margin-left: auto; display: flex; align-items: center; padding-right: 20px; gap: 22px; }
.count { gap: 8px; }
.avatar { width: 43px; height: 30px; border-radius: 4px; background: #303030; margin-left: -2px; }
.avatar span { width: 23px; height: 23px; border-radius: 50%; background: #63dcbf; color: #fff; font-size: 15px; line-height: 23px; }
.win .vr { margin: 0 -7px; }

.work { flex: 1; min-height: 0; display: flex; padding: 0 17px 0 16px; }
.rail { position: relative; width: 58px; flex: none; background: #303030; display: flex; flex-direction: column; align-items: center; gap: 16px; padding: 12px 0 10px; color: #cfcfcf; }
.rail.left { border-radius: 16px 0 0; } .rail.right { border-radius: 0 16px 0 0; }
.rail button { width: 26px; height: 26px; border-radius: 5px; }
.hr { width: 10px; height: 2px; background: #505050; flex: none; }
.tile { background: #8a8a8a; overflow: hidden; }
.tile svg { width: 26px; height: 26px; }
.tile.on { background: #ffdf3d; }
.foot { margin-top: auto; display: flex; flex-direction: column; gap: 16px; }
.rail .lay { background: #6f578f; color: #b98cf5; }
.rail .dark { background: #202020; }
.dim { color: #777; }
.active-dot { position: absolute; left: -5px; top: 83px; width: 4px; height: 4px; border-radius: 50%; background: #b57bff; }

.thumbs { width: 215px; flex: none; background: #363636; overflow: hidden; padding: 7px 0 0 24px; position: relative; }
.thumbs::after { content: ""; position: absolute; left: 0; right: 0; bottom: 0; height: 16px; background: linear-gradient(transparent, #2a2a2acc); }
figure { height: 235px; }
.frame { width: 157px; height: 200px; padding: 6px; border-radius: 6px; }
.current .frame { background: #453f4d; }
.frame svg { display: block; width: 145px; height: 188px; }
figcaption { width: 157px; text-align: center; font-size: 15px; line-height: 16px; color: #eee; }
.t-ndt { font: 700 42px "Open Sans", sans-serif; fill: #11477d; }
.t-title { font: 14px "Liberation Serif", serif; fill: #8a3b3b; }
.t-auth { font: 9px "Liberation Serif", serif; fill: #1c5d96; }

.viewer { flex: 1; min-width: 0; position: relative; background: #363636; display: grid; grid-template: 52px 1fr 9px / 1fr 10px; }
.toolbar { grid-column: 1 / 3; background: #3a3a3a; display: flex; align-items: center; gap: 16px; padding-left: 1px; overflow: hidden; color: #dcdcdc; }
.toolbar button { width: 24px; height: 24px; }
.sep { width: 3px; height: 12px; flex: none; background: linear-gradient(90deg, transparent 1px, #5c5c5c 1px 2px, transparent 2px); }
.sep.lit { margin: 0 -2px; background: linear-gradient(90deg, transparent 1px, #9a9a9a 1px 2px, transparent 2px); }
.page { background: #fff; overflow: hidden; padding: 14px 0 0 39px; font-family: "Liberation Serif", serif; color: #222; white-space: nowrap; min-height: 0; }
.page h1 { font-size: 23px; line-height: 27px; color: #7d3a3c; }
.authors { margin-top: 32px; font-size: 14px; line-height: 17px; color: #1a5688; }
sup { font-size: 70%; line-height: 0; vertical-align: 5px; }
.affil { margin-top: 5px; font-size: 10px; line-height: 14px; color: #5f5f5f; }
.affil u { text-decoration: none; border-bottom: 1px solid #f2426e; }
.corr { margin-top: 10px; font-size: 13px; line-height: 15px; }
mark { background: #a9adf5; color: inherit; padding: 0; }
.cols { margin-top: 39px; display: flex; gap: 20px; font-size: 11px; }
.col-a { width: 286px; flex: none; padding-top: 17px; }
.ln { display: block; line-height: 14px; height: 14px; text-align-last: justify; }
.ln.y, .ln.k { width: max-content; min-width: 100%; box-sizing: content-box; border-bottom: 1px solid #fff; height: 13px; }
.ln.y { background: #ffe827; } .k { background: #ff9fbb; }
.end { text-align-last: left; }
.keywords { margin-top: 4px; }
.col-a h2 { margin-top: 22px; font-size: 12px; line-height: 14px; font-weight: 700; letter-spacing: 1px; color: #12705a; }
.col-a h2 mark { background: #4effa0; }
.recent { margin-top: 33px; }
.col-b { flex: 1; min-width: 0; overflow: hidden; }
.p1 { margin-top: 3px; } .p2 { margin-top: 1px; }
.p1 .ln:first-child, .p2 .ln:first-child { padding-left: 14px; }
.hscroll { grid-row: 3; padding: 2px 0 1px 23px; }
.hscroll i { display: block; width: 62%; height: 6px; border-radius: 3px; background: #6a6a6a; }
.vscroll { grid-row: 2; grid-column: 2; padding: 110px 2px 58px; z-index: 3; display: flex; }
.vscroll i { width: 6px; border-radius: 3px; background: #6a6a6a; }
.selbar { position: absolute; left: 6px; right: 0; top: 367px; height: 43px; border-radius: 8px 0 0 8px; background: #393939; box-shadow: 0 2px 6px #0006; display: flex; align-items: center; gap: 18px; padding-left: 23px; overflow: hidden; color: #dcdcdc; }
.selbar button { width: 24px; height: 24px; }
.selbar .tr { width: auto; gap: 4px; font-size: 14px; margin-right: 2px; }
.selbar .drop { width: 25px; height: 25px; border-radius: 4px; background: #484848; }
.zoombar { position: absolute; left: 18px; right: 19px; bottom: 27px; height: 37px; border-radius: 4px; background: #393939; box-shadow: 0 2px 6px #0006; display: flex; align-items: center; justify-content: space-between; padding: 0 8px 0 10px; color: #dcdcdc; }
.zoombar button { min-width: 22px; }
.zoombar .dim { color: #888; }
.pct { display: flex; align-items: center; gap: 4px; }
.pct select { appearance: none; border: 0; background: none; color: inherit; font: 15px "Noto Sans", sans-serif; width: 52px; padding: 0; }
.zoombar input { width: 71px; height: 27px; border: 0; border-radius: 4px; background: #4b4b4b; color: inherit; text-align: center; font: 15px "Noto Sans", sans-serif; padding: 0; }

.ai { width: 311px; flex: none; background: #353535; padding: 0 13px 19px; display: flex; flex-direction: column; }
.ai-head { height: 47px; flex: none; margin-right: -8px; border-bottom: 1px solid #5a5a5a; display: flex; align-items: center; padding: 4px 4px 0 2px; }
.ai-head h2 { font-size: 14px; margin-left: 7px; flex: 1; }
.quota { height: 25px; width: 98px; border: 1px solid #b57bff; border-radius: 6px; color: #b57bff; font-size: 13px; display: flex; align-items: center; justify-content: center; gap: 2px; margin-right: 12px; }
.quota i { width: 1px; height: 11px; background: #666; margin: 0 4px; }
.tabs { margin: 9px 10px 0; height: 28px; flex: none; background: #2f2f2f; border-radius: 5px; padding: 2px; display: flex; }
.tabs button { flex: 1; font-size: 13px; border-radius: 4px; }
.tabs .sel { background: #505050; }
.file { margin-top: 10px; height: 50px; flex: none; border-radius: 8px; background: #4f4f4f; display: flex; align-items: center; gap: 13px; padding-left: 18px; white-space: nowrap; }
.file b { display: block; font-weight: 400; font-size: 13px; line-height: 19px; }
.file small { display: block; font-size: 11px; line-height: 16px; color: #8c8c8c; }
.bubble { align-self: flex-end; margin: 9px 2px 0 0; height: 39px; flex: none; padding: 0 12px; border-radius: 7px; font-size: 14px; line-height: 39px; color: #fff; background: linear-gradient(90deg, #b072ff, #868dff); white-space: nowrap; }
.from { margin-top: 9px; height: 22px; flex: none; display: flex; align-items: center; justify-content: space-between; padding: 0 5px 0 2px; font-size: 11px; color: #b8b8b8; }
.answer { margin: 6px 2px 0; flex: none; border-radius: 8px; background: #4f4f4f; padding: 10px 10px 13px 12px; }
.map { display: block; width: 100%; }
.acts { display: flex; justify-content: flex-end; align-items: center; gap: 12px; padding-top: 14px; color: #d5d5d5; }
.acts i { width: 1px; height: 10px; background: #6a6a6a; margin: 0 -2px; }
.chips { margin-top: auto; display: flex; gap: 8px; }
.chips button { height: 33px; padding: 0 8px; border-radius: 8px; background: #4f4f4f; gap: 7px; font-size: 15px; }
.ask { margin-top: 10px; height: 84px; flex: none; border-radius: 8px; background: #4f4f4f; padding: 9px 12px 7px 8px; display: flex; flex-direction: column; }
textarea { flex: 1; border: 0; background: none; resize: none; padding: 0; color: inherit; outline: none; font: 14px/24px "Noto Sans", "Noto Sans CJK SC", sans-serif; overflow: hidden; }
textarea::placeholder { color: #999; }
.ask-row { display: flex; align-items: center; gap: 17px; color: #cfcfcf; }
.bulb { width: 25px; height: 25px; border-radius: 4px; background: linear-gradient(#5c5468, #4b5d68); margin-right: auto; }
.send { color: #6f53a8; }

.credit { position: absolute; right: 0; bottom: 0; width: 226px; height: 45px; background: #fff; display: flex; align-items: center; gap: 9px; padding: 0 0 4px 10px; color: #0a0a3c; }
.words strong { display: block; font: 700 25px/24px "Noto Sans CJK SC", sans-serif; white-space: nowrap; }
.words small { display: block; font: 900 7px/8px Lato, sans-serif; letter-spacing: 2px; white-space: nowrap; }
.qa { margin-left: auto; margin-right: 15px; width: 62px; height: 29px; background: #4a6cf5; color: #fff; font: 700 22px/29px "Noto Sans CJK SC", sans-serif; text-align: center; }
</style>
